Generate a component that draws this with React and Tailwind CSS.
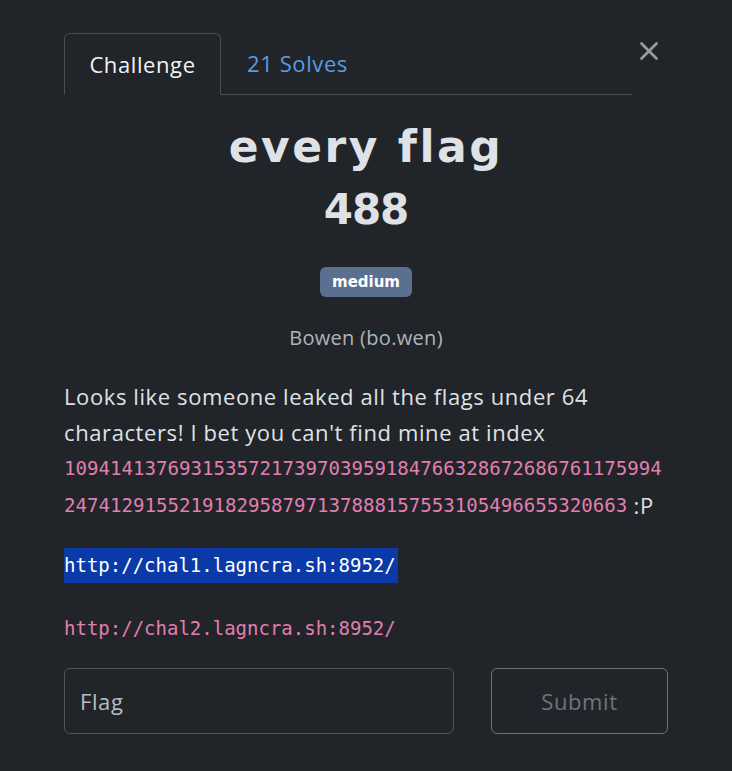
import React from "react";
import { X } from "lucide-react";

const sans = { fontFamily: "'Open Sans', 'Noto Sans', sans-serif" };
const mono = { fontFamily: "'DejaVu Sans Mono', monospace" };
const display = { fontFamily: "'DejaVu Sans', sans-serif" };

export default function App() {
  return (
    <div className="min-h-screen w-full bg-[#212429] text-[#dee2e6]" style={sans}>
      <div className="relative px-[64px] pt-[33px]">
        <button className="absolute right-[68px] top-[36px] text-[#9a9a9a]">
          <X size={30} strokeWidth={2.2} />
        </button>

        <div className="flex w-[568px] border-b border-[#4a4e55] text-[22px] tracking-[0.6px]">
          <div className="-mb-px flex h-[62px] w-[157px] items-center justify-center rounded-t-[6px] border border-b-[#212429] border-[#4a4e55] bg-[#212429] text-[#f1f3f5]">
            Challenge
          </div>
          <div className="flex h-[61px] items-center px-[26px] text-[#5b9be0]">21 Solves</div>
        </div>

        <div className="flex flex-col items-center">
          <h1 className="mt-[24px] text-[44px] font-bold leading-[56px] tracking-[2.5px] text-[#dee2e6]" style={display}>
            every flag
          </h1>
          <div className="mt-[9px] text-[42px] font-bold leading-[52px] tracking-[-1px] text-[#dee2e6]" style={display}>
            488
          </div>
          <span className="mt-[31px] rounded-[6px] bg-[#5b7090] px-[12px] py-[6px] text-[15px] font-bold leading-[18px] text-white" style={display}>
            medium
          </span>
          <div className="mt-[27px] text-[20px] leading-[28px] tracking-[0.3px] text-[#adb5bd]">Bowen (bo.wen)</div>
        </div>

        <div className="mt-[26px] text-[22px] leading-[36px] tracking-[0.6px] text-[#dee2e6]">
          <p className="[overflow-wrap:break-word]">
            Looks like someone leaked all the flags under 64 characters! I bet you can't find mine at index{" "}
            <code className="align-top text-[19.1px] leading-[37px] tracking-normal text-[#e07fb0]" style={mono}>
              10941413769315357217397039591847663286726867611759942474129155219182958797137888157553105496655320663
            </code>{" "}
            :P
          </p>
          <div className="mt-[23px] tracking-normal" style={mono}>
            <span className="inline-block h-[35px] bg-[#0a3aa8] pr-[2px] text-[19px] leading-[35px] text-white">
              http://chal1.lagncra.sh:8952/
            </span>
          </div>
          <div className="mt-[28px] text-[19px] leading-[34px] tracking-normal text-[#e07fb0]" style={mono}>
            http://chal2.lagncra.sh:8952/
          </div>
        </div>

        <div className="mt-[23px] flex gap-[37px]">
          <input
            placeholder="Flag"
            className="h-[66px] w-[390px] rounded-[6px] border border-[#50545b] bg-[#212429] px-[15px] text-[22px] tracking-[0.6px] text-[#dee2e6] outline-none placeholder:text-[#b8bcc2]"
          />
          <button className="h-[66px] w-[177px] rounded-[6px] border border-[#6c7178] text-[22px] tracking-[0.6px] text-[#6c757d]">
            Submit
          </button>
        </div>
      </div>
    </div>
  );
}
